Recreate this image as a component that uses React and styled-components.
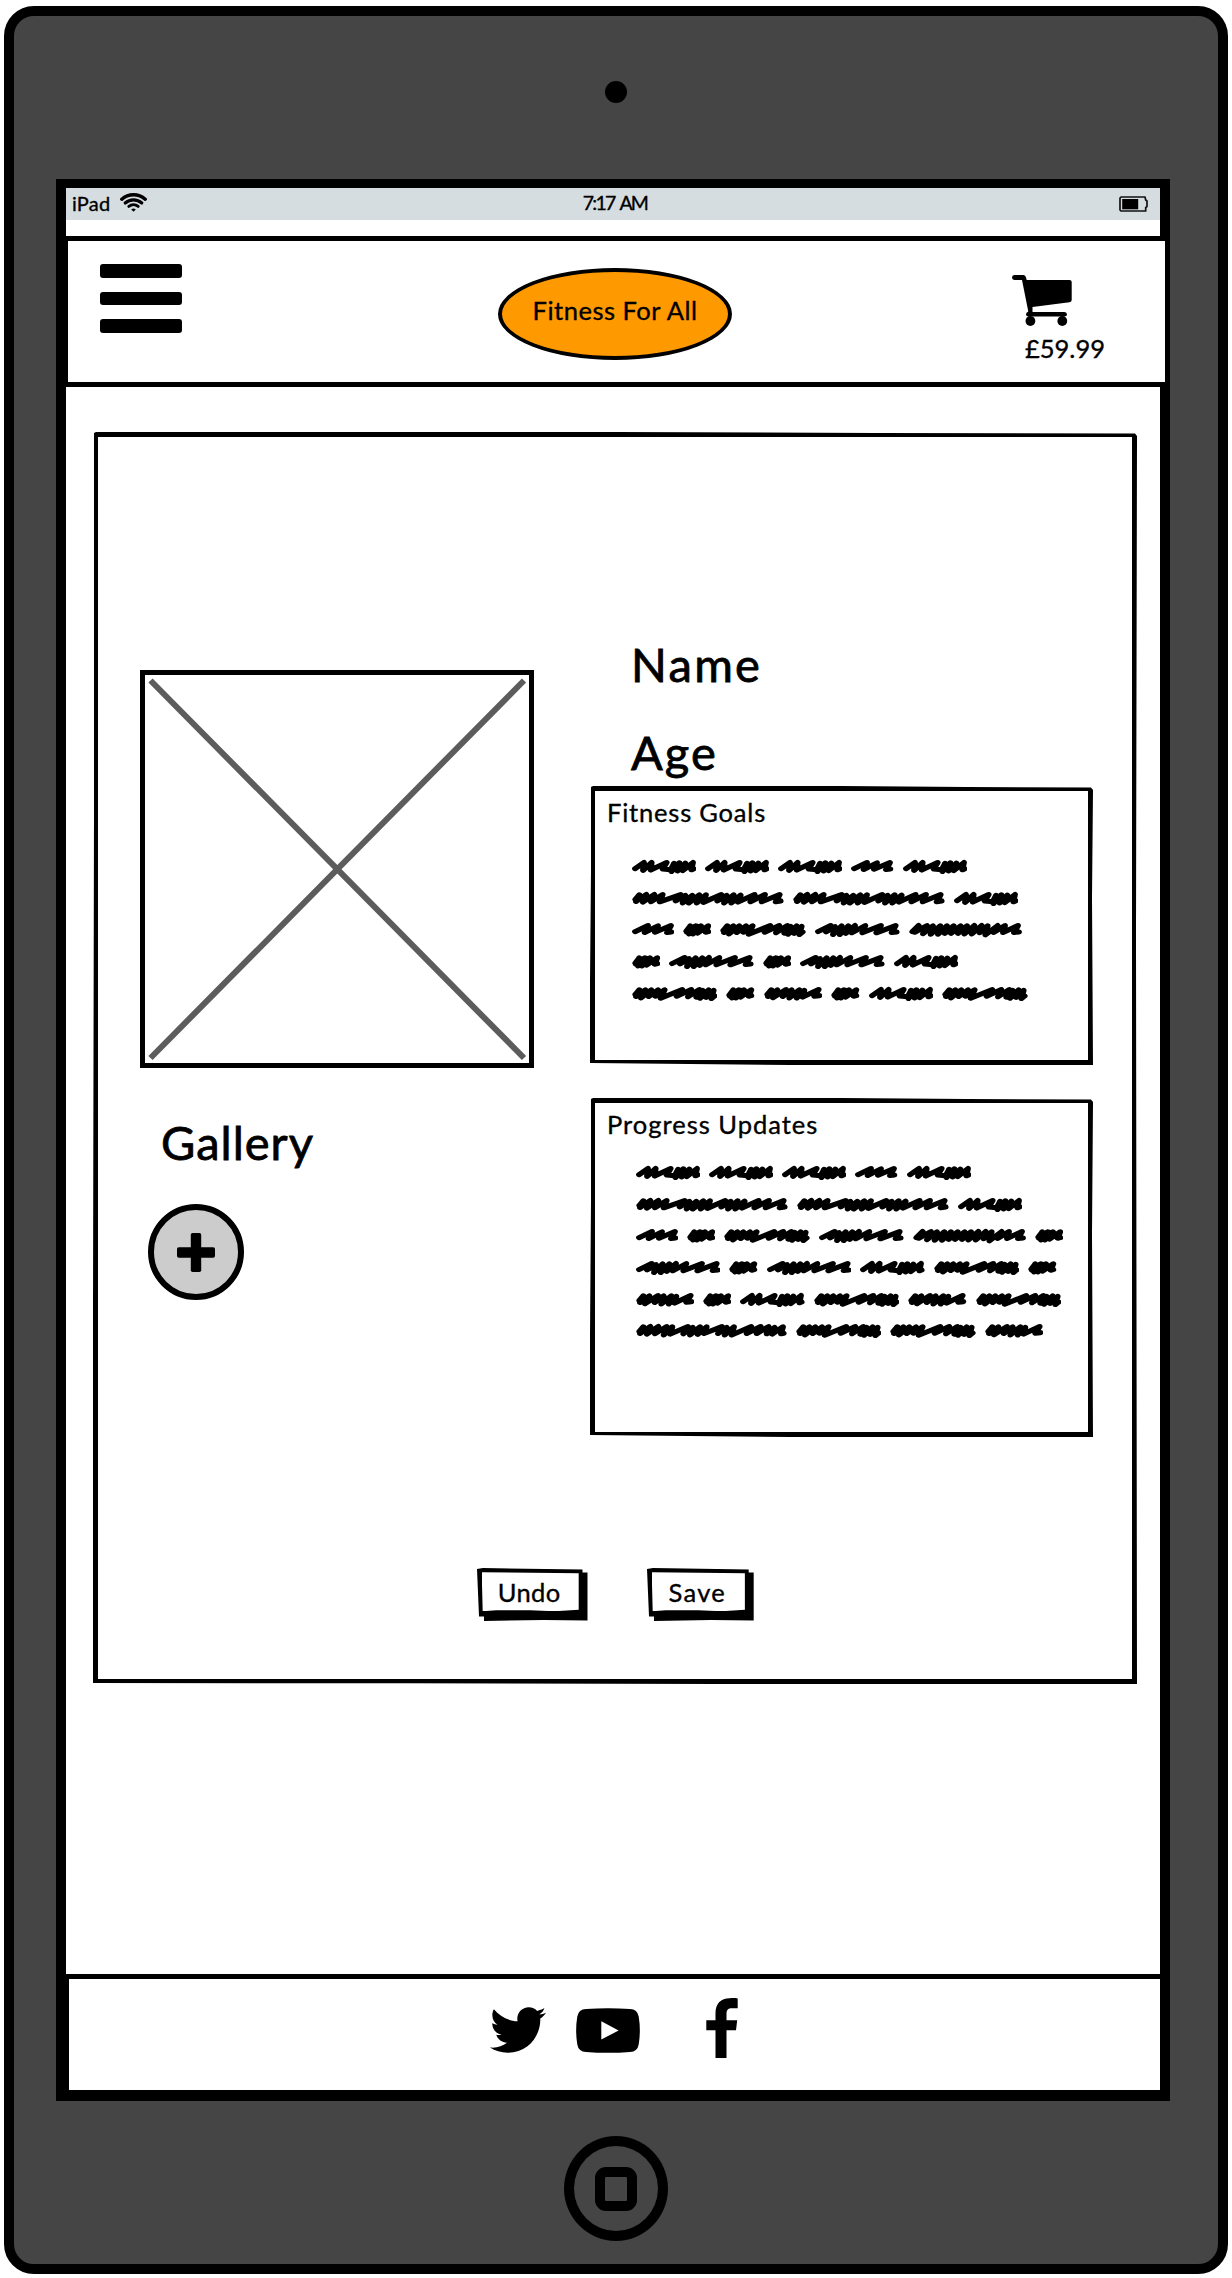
import React from "react";
import styled, { createGlobalStyle } from "styled-components";
import { FaTwitter } from "react-icons/fa";

const GlobalStyle = createGlobalStyle`
  *, *::before, *::after { box-sizing: border-box; }
  html, body { margin: 0; background: #fff; }
  body {
    font-family: Lato, "Open Sans", sans-serif;
    color: #000;
    overflow: hidden;
  }
  svg { display: block; flex: none; }
`;

const Page = styled.div`
  width: 1232px;
  height: 2278px;
  padding: 6px 0 0 4px;
  background: #fff;
`;

const Device = styled.div`
  width: 1224px;
  height: 2268px;
  border: 10px solid #000;
  border-radius: 30px;
  background: #454545;
  padding-top: 65px;
  display: flex;
  flex-direction: column;
  align-items: center;
`;

const Camera = styled.div`
  width: 22px;
  height: 22px;
  border-radius: 50%;
  background: #000;
`;

const Screen = styled.div`
  width: 1114px;
  height: 1922px;
  margin-top: 76px;
  margin-right: 6px;
  border: solid #000;
  border-width: 9px 10px 11px;
  background: #fff;
  display: flex;
  flex-direction: column;
`;

const HomeButton = styled.div`
  width: 104px;
  height: 105px;
  margin: 35px 0 0 0;
  border: 10px solid #000;
  border-radius: 50%;
  display: grid;
  place-items: center;
`;

const HomeGlyph = styled.div`
  width: 42px;
  height: 44px;
  border: 10px solid #000;
  border-radius: 11px;
`;

const Label = styled.span`
  display: block;
  white-space: nowrap;
  font-size: ${(p) => p.$size}px;
  line-height: ${(p) => p.$line}px;
  letter-spacing: ${(p) => p.$track || 0}px;
  word-spacing: ${(p) => p.$wordGap || 0}px;
  -webkit-text-stroke: ${(p) => p.$stroke || 0.35}px #000;
`;

const StatusBar = styled.div`
  height: 32px;
  padding: 0 2px 3px 6px;
  background: #d6dde0;
  display: grid;
  grid-template-columns: 1fr auto 1fr;
  align-items: center;
`;

const StatusLeft = styled.div`
  display: flex;
  align-items: center;
  gap: 10px;
`;

const StatusRight = styled.div`
  display: flex;
  justify-content: flex-end;
  padding: 2px 10px 0 0;
`;

const Header = styled.header`
  height: 151px;
  margin: 16px -9px 0 0;
  padding: 23px 63px 0 32px;
  border: solid #000;
  border-width: 5px 4px 5px 2px;
  background: #fff;
  display: flex;
  justify-content: space-between;
  align-items: flex-start;
`;

const MenuButton = styled.div`
  width: 82px;
  display: flex;
  flex-direction: column;
  gap: 14px;
`;

const MenuBar = styled.div`
  height: 13.7px;
  border-radius: 3px;
  background: #000;
`;

const Logo = styled.div`
  width: 234px;
  height: 92px;
  margin: 4px 0 0 36px;
  border: 4px solid #000;
  border-radius: 50%;
  background: #ff9900;
  display: flex;
  justify-content: center;
  padding-top: 22px;
`;

const Basket = styled.div`
  width: 90px;
  padding-top: 11px;
  display: flex;
  flex-direction: column;
  gap: 5.5px;
`;

const Price = styled.div`
  padding-left: 13px;
`;

const Main = styled.main`
  flex: 1;
  padding: 45px 23px 0 27px;
`;

const Card = styled.section`
  width: 1044px;
  height: 1252px;
  border: solid #000;
  border-width: 5px;
  clip-path: polygon(1px 1px, 3px 0, 50% 0, 75% 1px, calc(100% - 2px) 1.5px, 100% 4px, calc(100% - 1px) 40%, 100% 100%, 60% 100%, 30% 99.94%, 0 calc(100% - 1px), 0 70%, 1px 30%);
  padding: 202px 39px 0 42px;
`;

const Columns = styled.div`
  display: flex;
  justify-content: space-between;
`;

const MediaColumn = styled.div`
  width: 394px;
  padding-top: 31px;
  display: flex;
  flex-direction: column;
`;

const Photo = styled.div`
  height: 398px;
  border: solid #000;
  border-width: 5px;
  display: grid;
  place-items: center;
`;

const GalleryTitle = styled.div`
  padding: 50px 0 0 21px;
`;

const AddButton = styled.div`
  width: 96px;
  height: 96px;
  margin: 38px 0 0 8px;
  border: 6px solid #000;
  border-radius: 50%;
  background: #ccc;
  display: grid;
  place-items: center;
`;

const InfoColumn = styled.div`
  width: 503px;
  padding-top: 1px;
  display: flex;
  flex-direction: column;
`;

const Field = styled.div`
  padding-left: 41px;
  margin-bottom: ${(p) => p.$after}px;
`;

const Panel = styled.div`
  height: ${(p) => p.$height}px;
  margin-bottom: ${(p) => p.$after || 0}px;
  border: 5px solid #000;
  clip-path: polygon(1px 1px, 3px 0, 50% 0, 75% 1px, calc(100% - 2px) 1.5px, 100% 4px, calc(100% - 1px) 40%, 100% 100%, 40% 100%, 0 calc(100% - 2px), 0 70%, 1px 30%);
  padding: 7px 0 0 12px;
`;

const Note = styled.div`
  padding: ${(p) => p.$top}px 0 0 ${(p) => p.$left}px;
  display: flex;
  flex-direction: column;
  gap: 15.7px;
`;

const NoteLine = styled.div`
  display: flex;
  gap: 9px;
`;

const Actions = styled.div`
  display: flex;
  gap: 59.5px;
  margin: 131px 0 0 337px;
`;

const Button = styled.div`
  width: ${(p) => p.$width}px;
  height: 53px;
  padding: 4.3px 0 0 4.7px;
  background: #000;
  clip-path: polygon(0 1px, 6px 0, calc(100% - 5px) 1.5px, calc(100% - 5px) 4.5px, 100% 4.5px, 100% 52.5px, 60% 52px, 7px 53px, 7px 48.5px, 2px 48.5px);
`;

const ButtonFace = styled.div`
  width: calc(100% - 3.8px - 5px);
  height: 39px;
  background: #fff;
  clip-path: polygon(0 0, 100% 1px, 100% 96%, 75% 100%, 50% 97%, 15% 97%, 1px 100%);
  display: flex;
  justify-content: center;
  padding-top: 4px;
  padding-right: 2px;
`;

const Footer = styled.footer`
  height: 116px;
  padding: 18.5px 0 0 420.5px;
  border: solid #000;
  border-width: 5.5px 0 0 3.5px;
  display: flex;
  align-items: flex-start;
`;

const SocialIcon = styled.div`
  padding-top: ${(p) => p.$top}px;
  margin-right: ${(p) => p.$after || 0}px;
`;

const BirdIcon = styled(FaTwitter)`
  width: 56px;
  height: 56px;
  margin-top: -5px;
`;

// Every scribbled word: its width and the zigzag of its pen stroke, in thirds of a pixel.
const WORDS = {
  A: [193, "9,42 36,21 33,48 59,21 56,47 104,21 92,43 116,46 126,24 118,52 142,22 137,50 160,23 152,49 183,21 178,46 185,43"],
  M: [127, "9,42 48,21 38,45 78,22 69,44 117,21 105,45 118,43"],
  L: [456, "10,38 22,22 12,45 43,21 33,47 67,21 57,46 92,21 83,46 146,21 131,43 160,24 152,50 181,24 170,50 202,22 194,50 222,22 214,48 268,21 256,43 284,24 276,50 305,22 298,50 326,23 318,47 368,21 355,46 399,21 389,46 443,21 431,46 446,43"],
  K: [453, "10,38 22,22 12,45 43,21 33,47 67,21 57,46 92,21 83,50 109,22 103,47 156,21 142,46 170,24 162,50 192,22 185,48 212,22 204,45 258,21 246,45 272,24 266,50 294,22 287,50 346,21 332,45 374,21 362,45 398,21 392,46 416,24 409,47 441,22 435,46 443,44"],
  S: [86, "10,40 22,22 12,44 38,22 18,50 44,24 30,50 54,22 44,47 76,22 68,44 76,42"],
  C: [257, "10,38 22,22 12,45 40,22 27,50 58,22 50,45 78,22 70,44 98,22 86,51 151,21 134,44 178,21 168,46 202,21 193,47 212,24 204,51 230,22 222,48 245,24 238,52 248,43"],
  D: [254, "9,42 47,21 33,43 60,25 54,52 80,22 74,52 100,22 92,48 120,21 110,46 151,21 142,46 198,21 184,46 242,21 230,45 245,43"],
  E: [339, "10,42 29,21 17,44 54,21 42,49 72,22 65,51 94,22 87,51 114,22 107,48 134,22 126,48 155,22 147,48 174,22 166,50 196,21 188,50 218,21 212,46 236,22 229,53 266,21 254,45 288,21 282,45 327,21 315,45 330,43"],
  F: [175, "10,38 22,22 12,45 40,22 27,49 66,21 56,45 83,22 76,50 106,22 98,50 121,24 116,47 164,21 151,44 166,42"],
};

const GOALS = ["AAAMA", "LLA", "MSCDE", "SDSDA", "CSFSAC"];
const UPDATES = ["AAAMA", "LLA", "MSCDES", "DSDACS", "FSACFC", "KCCF"];

function Word({ kind }) {
  const [width, points] = WORDS[kind];
  return (
    <svg width={width / 3} height="16" viewBox={`0 12 ${width} 48`}>
      <polyline
        points={points}
        transform="translate(0 4.4) scale(1 .87)"
        fill="none"
        stroke="#000"
        strokeWidth="17.5"
        strokeLinecap="round"
        strokeLinejoin="round"
      />
    </svg>
  );
}

function Scribble({ lines, top, left }) {
  return (
    <Note $top={top} $left={left}>
      {lines.map((line, i) => (
        <NoteLine key={i}>
          {line.split("").map((kind, j) => (
            <Word key={j} kind={kind} />
          ))}
        </NoteLine>
      ))}
    </Note>
  );
}

function WifiIcon() {
  return (
    <svg width="27" height="19" viewBox="0 0 27 19" fill="none" stroke="#000" strokeLinecap="round">
      <path d="M1.8 6.2C8.4.3 18.6.3 25.2 6.2" strokeWidth="3.5" />
      <path d="M5.2 10C10 5.8 17 5.8 21.8 10" strokeWidth="3.2" />
      <path d="M8.8 13.4C11.6 11.1 15.4 11.1 18.2 13.4" strokeWidth="2.9" />
      <path d="M11.2 16.4Q13.5 14.800 15.8 16.4L13.500 18.8Z" fill="#000" stroke="none" />
    </svg>
  );
}

function BatteryIcon() {
  return (
    <svg width="29" height="16" viewBox="0 0 29 16">
      <path
        d="M2 1H26L26.7 4L28 5V10.500L26.700 11.500V15H2L1 14V2Z"
        fill="none"
        stroke="#111"
        strokeWidth="1.7"
        strokeLinejoin="round"
      />
      <rect x="3.2" y="3" width="16" height="10.300" fill="#000" />
    </svg>
  );
}

function CartIcon() {
  return (
    <svg width="61" height="51" viewBox="0 0 61 51">
      <path
        d="M2.300 0H11.500Q13.500 0 14 2.500L14.700 5H57.500Q59.700 5 59.700 7V25Q59.700 27 57.500 27.300L20.500 32V37H52.500Q55 37.300 55 39.500Q55 41.500 52.500 41.500H16.500Q14 41.500 14 39.500Q14 37.500 16.300 36.500L10 5H2.300Q0 4.500 0 2.500Q0 .3 2.300 0Z"
        fill="#000"
      />
      <circle cx="18.400" cy="46" r="4.900" />
      <circle cx="50.300" cy="46" r="4.900" />
    </svg>
  );
}

function PlusIcon() {
  return (
    <svg width="38" height="39" viewBox="0 0 38 39">
      <rect x="0" y="14.300" width="38" height="10.400" rx="1.800" />
      <rect x="13.800" y="0" width="10.400" height="39" rx="1.800" />
    </svg>
  );
}

function CrossedPlaceholder() {
  return (
    <svg width="384" height="388" viewBox="0 0 384 388" stroke="#5c5c5c" strokeWidth="6">
      <path d="M5.500 5.500L379 383M379 5.500L5.500 383" />
    </svg>
  );
}

function YoutubeIcon() {
  return (
    <svg width="64" height="45" viewBox="0 0 64 45">
      <path
        fillRule="evenodd"
        d="M10 1Q32 -.7 54 1Q61.500 1.400 62.700 8.500Q65 22.500 62.700 36.500Q61.500 43.600 54 44Q32 45.700 10 44Q2.500 43.600 1.300 36.500Q-1 22.500 1.300 8.500Q2.500 1.400 10 1ZM25.300 13.300V31.600L42.600 22.500Z"
      />
    </svg>
  );
}

function FacebookIcon() {
  return (
    <svg width="32" height="60" viewBox="0 0 32 60">
      <path d="M31.700.4V10.200H26.500C21.500 10.200 20.500 12 20.500 16V22.200H31.200L30 32.200H20.500V60H9.500V32.200H.3V22.200H9.500V15C9.500 5.500 15 .2 23.500.2C27 0 30 .1 31.700.4Z" />
    </svg>
  );
}

export default function App() {
  return (
    <Page>
      <GlobalStyle />
      <Device>
        <Camera />
        <Screen>
          <StatusBar>
            <StatusLeft>
              <Label $size={20} $line={28} $track={0.2}>iPad</Label>
              <WifiIcon />
            </StatusLeft>
            <Label $size={19.5} $line={28} $track={-1.8} $wordGap={2.5}>7:17 AM</Label>
            <StatusRight>
              <BatteryIcon />
            </StatusRight>
          </StatusBar>
          <Header>
            <MenuButton>
              <MenuBar />
              <MenuBar />
              <MenuBar />
            </MenuButton>
            <Logo>
              <Label $size={25.5} $line={32} $track={0.5}>Fitness For All</Label>
            </Logo>
            <Basket>
              <CartIcon />
              <Price>
                <Label $size={25.5} $line={32}>£59.99</Label>
              </Price>
            </Basket>
          </Header>
          <Main>
            <Card>
              <Columns>
                <MediaColumn>
                  <Photo>
                    <CrossedPlaceholder />
                  </Photo>
                  <GalleryTitle>
                    <Label $size={47} $line={48} $stroke={0.8} $track={1}>Gallery</Label>
                  </GalleryTitle>
                  <AddButton>
                    <PlusIcon />
                  </AddButton>
                </MediaColumn>
                <InfoColumn>
                  <Field $after={40}>
                    <Label $size={47} $line={48} $stroke={0.8} $track={2.3}>Name</Label>
                  </Field>
                  <Field $after={10}>
                    <Label $size={47} $line={48} $stroke={0.8} $track={2}>Age</Label>
                  </Field>
                  <Panel $height={279} $after={33}>
                    <Label $size={25.5} $line={28} $track={0.8}>Fitness Goals</Label>
                    <Scribble lines={GOALS} top={33} left={24.5} />
                  </Panel>
                  <Panel $height={339}>
                    <Label $size={25.5} $line={28} $track={1}>Progress Updates</Label>
                    <Scribble lines={UPDATES} top={27} left={28.5} />
                  </Panel>
                </InfoColumn>
              </Columns>
              <Actions>
                <Button $width={110.5}>
                  <ButtonFace>
                    <Label $size={25.5} $line={32} $track={0.4}>Undo</Label>
                  </ButtonFace>
                </Button>
                <Button $width={106.7}>
                  <ButtonFace>
                    <Label $size={25.5} $line={32} $track={1.3}>Save</Label>
                  </ButtonFace>
                </Button>
              </Actions>
            </Card>
          </Main>
          <Footer>
            <SocialIcon $top={9} $after={30.5}>
              <BirdIcon />
            </SocialIcon>
            <SocialIcon $top={10} $after={66}>
              <YoutubeIcon />
            </SocialIcon>
            <SocialIcon $top={0}>
              <FacebookIcon />
            </SocialIcon>
          </Footer>
        </Screen>
        <HomeButton>
          <HomeGlyph />
        </HomeButton>
      </Device>
    </Page>
  );
}
